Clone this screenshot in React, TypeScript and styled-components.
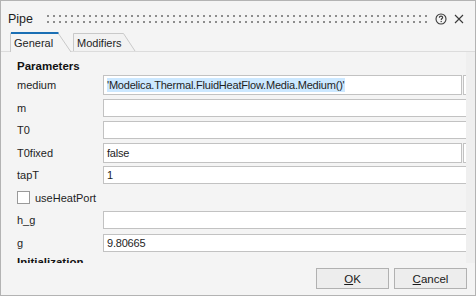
import React from 'react'
import styled, { createGlobalStyle } from 'styled-components'

const GlobalStyle = createGlobalStyle`
  html, body {
    margin: 0;
    padding: 0;
    background: #f4f4f4;
  }
  body {
    font-family: 'Liberation Sans', Arial, sans-serif;
    font-size: 11px;
    color: #1e1e1e;
  }
`

type Row =
  | { kind: 'header'; label: string }
  | { kind: 'field'; label: string; value?: string; combo?: boolean; highlight?: boolean }
  | { kind: 'check'; label: string }

const rows: Row[] = [
  { kind: 'header', label: 'Parameters' },
  { kind: 'field', label: 'medium', value: "'Modelica.Thermal.FluidHeatFlow.Media.Medium()'", combo: true, highlight: true },
  { kind: 'field', label: 'm' },
  { kind: 'field', label: 'T0' },
  { kind: 'field', label: 'T0fixed', value: 'false', combo: true },
  { kind: 'field', label: 'tapT', value: '1' },
  { kind: 'check', label: 'useHeatPort' },
  { kind: 'field', label: 'h_g' },
  { kind: 'field', label: 'g', value: '9.80665' },
  { kind: 'header', label: 'Initialization' },
]

export default function App() {
  return (
    <>
      <GlobalStyle />
      <Window>
        <TitleBar>
          <Title>Pipe</Title>
          <Grip />
          <TitleIcon aria-label="Help">
            <svg width="12" height="12" viewBox="0 0 12 12">
              <circle cx="6" cy="6" r="5" fill="none" stroke="#3a3a3a" strokeWidth="1.1" />
              <path d="M4.3 4.7 C4.3 3.6 5.1 3.1 6 3.1 C7 3.1 7.7 3.7 7.7 4.5 C7.7 5.5 6.2 5.6 6.2 6.9" fill="none" stroke="#3a3a3a" strokeWidth="1.1" />
              <rect x="5.6" y="7.9" width="1.2" height="1.2" fill="#3a3a3a" />
            </svg>
          </TitleIcon>
          <TitleIcon aria-label="Close">
            <svg width="10" height="10" viewBox="0 0 10 10">
              <path d="M1 1 L9 9 M9 1 L1 9" stroke="#3a3a3a" strokeWidth="1.1" />
            </svg>
          </TitleIcon>
        </TitleBar>

        <TabBar>
          <Tab $width={62} $height={20} $active>
            <TabShape width="62" height="20" viewBox="0 0 62 20">
              <path d="M0.5 20 V1 H48 L61 20" fill="#f4f4f4" stroke="#c9c9c9" />
              <rect x="1" y="0" width="47.5" height="2" fill="#1a6fb4" />
            </TabShape>
            <TabLabel>General</TabLabel>
          </Tab>
          <Tab $width={63} $height={18}>
            <TabShape width="63" height="18" viewBox="0 0 63 18">
              <path d="M0.5 18 V0.5 H50.5 L62 18" fill="#f2f2f2" stroke="#c9c9c9" />
            </TabShape>
            <TabLabel>Modifiers</TabLabel>
          </Tab>
        </TabBar>

        <Panel>
          <Scroller>
            <Form>
              {rows.map((row, i) => {
                if (row.kind === 'header') return <SectionHeader key={i}>{row.label}</SectionHeader>
                if (row.kind === 'check')
                  return (
                    <CheckRow key={i}>
                      <CheckBox />
                      <span>{row.label}</span>
                    </CheckRow>
                  )
                return (
                  <FieldRow key={i}>
                    <Label>{row.label}</Label>
                    <FieldCell>
                      <Input $combo={!!row.combo}>
                        {row.value && (row.highlight ? <Selected>{row.value}</Selected> : row.value)}
                      </Input>
                      {row.combo && <SideButton />}
                    </FieldCell>
                  </FieldRow>
                )
              })}
            </Form>
          </Scroller>
          <RightStrip />
        </Panel>

        <Footer>
          <Button>
            <u>O</u>K
          </Button>
          <Button>
            <u>C</u>ancel
          </Button>
        </Footer>
      </Window>
    </>
  )
}

const Window = styled.div`
  box-sizing: border-box;
  width: 476px;
  height: 296px;
  border: 1px solid #b3b3b3;
  background: #f4f4f4;
  display: flex;
  flex-direction: column;
  overflow: hidden;
`

const TitleBar = styled.div`
  box-sizing: border-box;
  height: 30px;
  padding: 5px 8px 0 7px;
  display: flex;
  align-items: center;
`

const Title = styled.div`
  font-size: 12.5px;
  color: #1e1e1e;
  margin-right: 14px;
`

const Grip = styled.div`
  flex: 1;
  height: 8px;
  margin-right: 4px;
  background-image: linear-gradient(to right, #f4f4f4 0 4px, transparent 4px),
    linear-gradient(to bottom, #8d8d8d 0 2px, transparent 2px);
  background-size: 6px 6px;
  background-position: -4px 0;
`

const TitleIcon = styled.div`
  width: 16px;
  height: 16px;
  display: flex;
  align-items: center;
  justify-content: center;
  margin-left: 2px;
`

const TabBar = styled.div`
  height: 20px;
  padding-left: 9px;
  display: flex;
  align-items: flex-end;
  gap: 1px;
`

const Tab = styled.div<{ $width: number; $height: number; $active?: boolean }>`
  position: relative;
  width: ${({ $width }) => $width}px;
  height: ${({ $height }) => $height}px;
  margin-bottom: ${({ $active }) => ($active ? '-1px' : '0')};
  z-index: ${({ $active }) => ($active ? 2 : 1)};
  display: flex;
  align-items: center;
  padding-left: 4px;
  box-sizing: border-box;
`

const TabShape = styled.svg`
  position: absolute;
  left: 0;
  top: 0;
`

const TabLabel = styled.span`
  position: relative;
  padding-top: 1px;
`

const Panel = styled.div`
  height: 211px;
  border-top: 1px solid #dcdcdc;
  display: flex;
`

const Scroller = styled.div`
  width: 465px;
  overflow: hidden;
`

const RightStrip = styled.div`
  flex: 1;
  background: #efefef;
`

const Form = styled.div`
  width: 490px;
  padding: 6px 0 0 16px;
  display: flex;
  flex-direction: column;
`

const SectionHeader = styled.div`
  height: 16px;
  flex-shrink: 0;
  font-weight: bold;
  font-size: 11.5px;
  color: #111;
  display: flex;
  align-items: center;
`

const FieldRow = styled.div`
  height: 22.5px;
  flex-shrink: 0;
  display: grid;
  grid-template-columns: 86px 388px;
`

const Label = styled.div`
  display: flex;
  align-items: center;
`

const FieldCell = styled.div`
  display: flex;
  align-items: center;
`

const Input = styled.div<{ $combo: boolean }>`
  box-sizing: border-box;
  height: ${({ $combo }) => ($combo ? '20px' : '18px')};
  width: ${({ $combo }) => ($combo ? '359px' : '388px')};
  background: #fff;
  border: 1px solid #c2c2c2;
  padding-left: 3px;
  display: flex;
  align-items: center;
  white-space: nowrap;
  overflow: hidden;
  letter-spacing: -0.2px;
`

const Selected = styled.span`
  background: #cce8ff;
  padding: 1px 0;
`

const SideButton = styled.div`
  box-sizing: border-box;
  width: 20px;
  height: 20px;
  margin-left: 1px;
  border: 1px solid #c2c2c2;
  background: #fff;
`

const CheckRow = styled.div`
  height: 22.5px;
  flex-shrink: 0;
  display: flex;
  align-items: center;
  gap: 5px;
`

const CheckBox = styled.div`
  box-sizing: border-box;
  width: 13px;
  height: 13px;
  border: 1px solid #9a9a9a;
  background: #fff;
`

const Footer = styled.div`
  flex: 1;
  display: flex;
  justify-content: flex-end;
  align-items: flex-start;
  gap: 5px;
  padding: 5px 8px 0 0;
`

const Button = styled.div`
  box-sizing: border-box;
  width: 73px;
  height: 21px;
  border: 1px solid #b1b1b1;
  background: #ededed;
  display: flex;
  align-items: center;
  justify-content: center;
  font-size: 11.5px;
  color: #1a1a1a;
`
